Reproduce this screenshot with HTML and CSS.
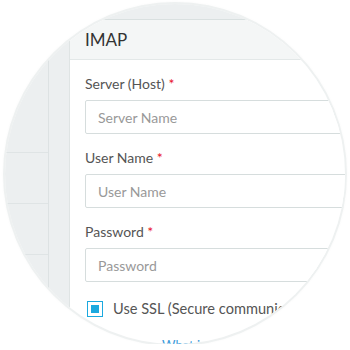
FILE: index.html
```html
<!DOCTYPE html>
<html lang="en">

<head>
    <meta charset="UTF-8">
    <meta name="viewport" content="width=device-width, initial-scale=1.0">
    <title>IMAP</title>
    <link rel="stylesheet" href="styles.css">
</head>

<body>
    <div class="lens">
        <div class="screen">
            <aside class="sidebar">
                <div class="side-item side-top"></div>
                <div class="side-item"></div>
                <div class="side-item"></div>
                <div class="side-item"></div>
            </aside>
            <div class="gutter"></div>
            <section class="card">
                <div class="card-head">IMAP</div>
                <div class="card-body">
                    <div class="field">
                        <label>Server (Host) <span class="req">*</span></label>
                        <input type="text" class="input" placeholder="Server Name">
                    </div>
                    <div class="field">
                        <label>User Name <span class="req">*</span></label>
                        <input type="text" class="input" placeholder="User Name">
                    </div>
                    <div class="field">
                        <label>Password <span class="req">*</span></label>
                        <input type="password" class="input" placeholder="Password">
                    </div>
                    <div class="check">
                        <span class="box"><span class="tick"></span></span>
                        <span>Use SSL (Secure communication)</span>
                    </div>
                    <a class="help" href="#">What is this?</a>
                </div>
            </section>
        </div>
    </div>
</body>

</html>
```

FILE: styles.css
```css
body {
    margin: 0;
    background-color: #fff;
    font-family: Lato, "Noto Sans", sans-serif;
}

.lens {
    width: 340px;
    height: 340px;
    margin: 4px 0 0 5px;
    border-radius: 50%;
    overflow: hidden;
    box-shadow: 0 0 0 2px #eef1f1, 0 0 4px rgba(0, 0, 0, 0.08);
}

.screen {
    display: flex;
    height: 100%;
    background-color: #eceff0;
}

.sidebar {
    width: 43px;
    flex-shrink: 0;
    border-right: 1px solid #dde2e3;
}

.side-item {
    height: 50px;
    border-bottom: 1px solid #dfe4e5;
}

.side-top {
    height: 148px;
}

.gutter {
    width: 20px;
    flex-shrink: 0;
}

.card {
    flex: 1;
    margin-top: 15px;
    background-color: #fff;
    border-top: 1px solid #d9e0e0;
    border-left: 1px solid #dfe4e4;
    min-width: 0;
}

.card-head {
    height: 39px;
    line-height: 39px;
    padding-left: 15px;
    font-size: 17px;
    color: #333;
    background-color: #f4f6f6;
    border-bottom: 1px solid #e3e8e8;
}

.card-body {
    padding: 14px 0 0 15px;
    white-space: nowrap;
}

.field {
    margin-bottom: 14px;
}

.field label {
    display: block;
    height: 20px;
    line-height: 20px;
    margin-bottom: 6px;
    font-size: 14px;
    color: #555;
}

.req {
    color: #e8132a;
}

.input {
    display: block;
    box-sizing: border-box;
    width: 300px;
    height: 34px;
    padding: 0 12px;
    border: 1px solid #d6dddd;
    border-radius: 2px;
    font-family: inherit;
    font-size: 14px;
    color: #555;
}

.input::placeholder {
    color: #999;
}

.check {
    display: flex;
    align-items: center;
    gap: 10px;
    margin-top: 18px;
    padding-left: 2px;
    font-size: 14.6px;
    color: #555;
}

.box {
    box-sizing: border-box;
    width: 16px;
    height: 16px;
    padding: 3px;
    border: 1px solid #1ba9df;
}

.tick {
    display: block;
    width: 8px;
    height: 8px;
    background-color: #1ba9df;
}

.help {
    display: block;
    margin: 20px 0 0 77px;
    font-size: 13px;
    color: #3a9ad9;
    text-decoration: none;
}
```
